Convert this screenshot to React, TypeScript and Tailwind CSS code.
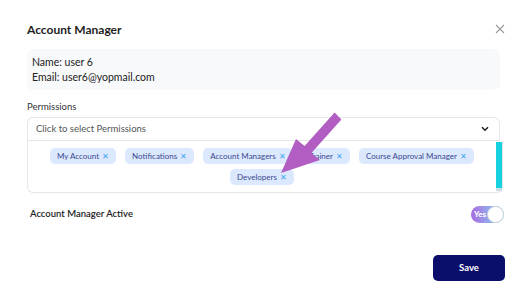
import React from "react";

const tags1 = ["My Account", "Notifications", "Account Managers", "Trainer", "Course Approval Manager"];
const tags2 = ["Developers"];

function Tag({ label }: { label: string }) {
  return (
    <div className="flex h-[16px] shrink-0 items-center gap-[3px] whitespace-nowrap rounded-[5px] bg-[#dce8fd] px-[7px] text-[8px] text-[#3a4891]">
      <span>{label}</span>
      <span className="text-[8px] leading-none text-[#3ea6f2]">✕</span>
    </div>
  );
}

export default function App() {
  return (
    <div
      className="relative h-[291px] w-[528px] overflow-hidden bg-white px-[27px] text-[#222]"
      style={{ fontFamily: "Lato, 'Open Sans', sans-serif" }}
    >
      <div className="flex h-[49px] items-start justify-between pt-[21px]">
        <div className="text-[12px] font-bold leading-[17px] text-[#1e1e1e]">Account Manager</div>
        <svg width="10" height="10" viewBox="0 0 10 10" className="mr-[-4px] mt-[3px]">
          <path d="M1 1L9 9M9 1L1 9" stroke="#9a9a9a" strokeWidth="1.1" />
        </svg>
      </div>
      <div className="flex h-[41px] w-[473px] flex-col justify-center rounded-[6px] bg-[#f8f9fa] px-[5px] text-[10.5px] leading-[15px] text-[#222]">
        <div>Name: user 6</div>
        <div>Email: user6@yopmail.com</div>
      </div>
      <div className="mt-[9px] h-[16px] text-[9.5px] leading-[16px] text-[#333]">Permissions</div>
      <div className="mt-[2px] flex h-[24px] w-[473px] items-center justify-between rounded-t-[6px] border border-[#e4e6ea] pl-[8px] pr-[10px] text-[9.5px] text-[#555]">
        <span>Click to select Permissions</span>
        <svg width="8" height="6" viewBox="0 0 8 6">
          <path d="M1 1.2L4 4.2L7 1.2" stroke="#222" strokeWidth="1.6" fill="none" />
        </svg>
      </div>
      <div className="flex h-[52px] w-[476px] rounded-b-[6px] border border-t-0 border-[#e4e6ea]">
        <div className="flex flex-1 flex-col items-center gap-[5px] pt-[7px]">
          <div className="flex gap-[9px]">
            {tags1.map((t) => (
              <Tag key={t} label={t} />
            ))}
          </div>
          <div className="flex gap-[9px]">
            {tags2.map((t) => (
              <Tag key={t} label={t} />
            ))}
          </div>
        </div>
        <div className="flex w-[6px] flex-col pt-[1px]">
          <div className="h-[46px] w-[6px] bg-[#16d2e0]" />
          <div className="h-[3px] w-[6px] bg-[#c8dde6]" />
        </div>
      </div>
      <div className="mt-[12px] flex h-[18px] items-center justify-between pl-[3px]">
        <span className="text-[9.5px] font-semibold text-[#222]">Account Manager Active</span>
        <div className="mr-[-3px] flex h-[17px] w-[33px] items-center justify-between rounded-full bg-gradient-to-r from-[#a66be0] to-[#6ad6f4] pl-[3px]">
          <span className="text-[8px] font-bold leading-none text-white">Yes</span>
          <div className="h-[17px] w-[17px] rounded-full border border-[#d0d3d8] bg-white" />
        </div>
      </div>
      <div className="mt-[32px] flex justify-end">
        <button className="mr-[-4px] h-[26px] w-[72px] rounded-[5px] bg-[#0b0f6b] text-[9.5px] font-bold text-white">
          Save
        </button>
      </div>
      <svg className="pointer-events-none absolute left-0 top-0" width="528" height="291">
        <polygon
          points="281,173 296,139 304.6,145.9 334.6,112.4 341.4,119.6 311.4,153.1 320,160"
          fill="#b15dc2"
        />
      </svg>
    </div>
  );
}
